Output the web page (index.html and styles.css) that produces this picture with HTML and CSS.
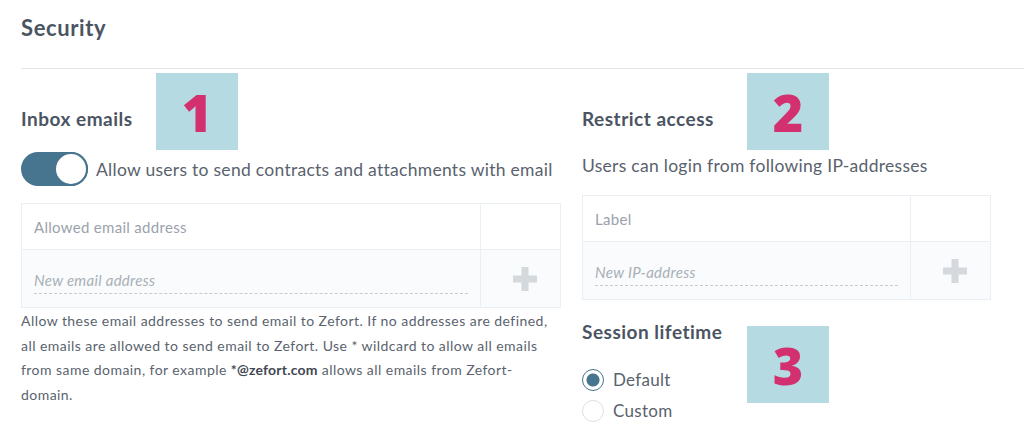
FILE: index.html
```html
<!DOCTYPE html>
<html lang="en">
<head>
    <meta charset="UTF-8">
    <title>Security</title>
    <link rel="stylesheet" href="styles.css">
</head>
<body>
    <div class="page">
        <h1 class="page_title">Security</h1>
        <div class="columns">
            <!-- 左列 -->
            <div class="col col_left">
                <div class="section">
                    <h2 class="section_title">Inbox emails</h2>
                    <span class="badge badge_1">1</span>
                    <label class="switch_row">
                        <span class="switch"><span class="knob"></span></span>
                        <span class="switch_label">Allow users to send contracts and attachments with email</span>
                    </label>
                    <div class="table">
                        <div class="row head">
                            <div class="cell main">Allowed email address</div>
                            <div class="cell side"></div>
                        </div>
                        <div class="row new">
                            <div class="cell main"><span class="input">New email address</span></div>
                            <div class="cell side">
                                <svg class="plus" width="24" height="24" viewBox="0 0 24 24"><path d="M8.5 0h7v8.5H24v7h-8.5V24h-7v-8.5H0v-7h8.5z" fill="#d3d9dd"/></svg>
                            </div>
                        </div>
                    </div>
                    <p class="help">Allow these email addresses to send email to Zefort. If no addresses are defined, all emails are allowed to send email to Zefort. Use * wildcard to allow all emails from same domain, for example <b>*@zefort.com</b> allows all emails from Zefort-domain.</p>
                </div>
            </div>
            <!-- 右列 -->
            <div class="col col_right">
                <div class="section">
                    <h2 class="section_title">Restrict access</h2>
                    <span class="badge badge_2">2</span>
                    <p class="lead">Users can login from following IP-addresses</p>
                    <div class="table">
                        <div class="row head">
                            <div class="cell main">Label</div>
                            <div class="cell side"></div>
                        </div>
                        <div class="row new">
                            <div class="cell main"><span class="input">New IP-address</span></div>
                            <div class="cell side">
                                <svg class="plus" width="24" height="24" viewBox="0 0 24 24"><path d="M8.5 0h7v8.5H24v7h-8.5V24h-7v-8.5H0v-7h8.5z" fill="#d3d9dd"/></svg>
                            </div>
                        </div>
                    </div>
                </div>
                <div class="section session">
                    <h2 class="section_title">Session lifetime</h2>
                    <span class="badge badge_3">3</span>
                    <label class="radio_row"><span class="radio checked"></span>Default</label>
                    <label class="radio_row"><span class="radio"></span>Custom</label>
                </div>
            </div>
        </div>
    </div>
</body>
</html>
```

FILE: styles.css
```css
*{
    margin: 0;
    padding: 0;
    box-sizing: border-box;
}

body{
    font-family: Lato, "Open Sans", sans-serif;
    color: #5a636e;
    background-color: #fff;
    overflow: hidden;
}

.page{
    padding: 14px 0 0 21px;
}

.page_title{
    font-size: 22px;
    font-weight: bold;
    letter-spacing: 0.6px;
    color: #4b5462;
    line-height: 28px;
    padding-bottom: 26px;
    border-bottom: 1px solid #e3e6e9;
}

.columns{
    display: flex;
    gap: 21px;
}

.col_left{
    width: 540px;
}

.col_right{
    width: 409px;
}

.section{
    position: relative;
    padding-top: 38px;
}

.section_title{
    font-size: 19px;
    font-weight: bold;
    letter-spacing: 0.5px;
    color: #4b5462;
    line-height: 24px;
}

.badge{
    position: absolute;
    width: 82px;
    height: 77px;
    background-color: #b5dae2;
    color: #d3306f;
    font-family: "Open Sans", sans-serif;
    font-size: 52px;
    font-weight: 800;
    line-height: 77px;
    text-align: center;
}

.badge_1{
    top: 4px;
    left: 135px;
}

.badge_2{
    top: 4px;
    left: 165px;
}

.badge_3{
    top: 26px;
    left: 165px;
}

.switch_row{
    display: flex;
    align-items: center;
    gap: 8px;
    margin-top: 21px;
}

.switch{
    position: relative;
    width: 67px;
    height: 34px;
    border-radius: 17px;
    background-color: #47748f;
}

.switch .knob{
    position: absolute;
    right: 0;
    top: 0;
    width: 34px;
    height: 34px;
    border-radius: 50%;
    background-color: #fff;
    border: 2px solid #47748f;
}

.switch_label{
    font-size: 17.5px;
    letter-spacing: 0.28px;
    color: #59626d;
}

.table{
    margin-top: 17px;
    border: 1px solid #e9eff3;
}

.row{
    display: flex;
}

.row.head{
    height: 46px;
    background-color: #fff;
    border-bottom: 1px solid #e9eff3;
}

.row.new{
    height: 57px;
    background-color: #f9fbfc;
}

.cell{
    display: flex;
    align-items: center;
}

.cell.main{
    flex: 1;
    padding: 0 12px;
    font-size: 15px;
    letter-spacing: 0.3px;
    color: #9aa2ac;
}

.cell.side{
    width: 80px;
    padding-left: 8px;
    border-left: 1px solid #e9eff3;
    justify-content: center;
}

.input{
    display: block;
    width: 100%;
    font-style: italic;
    color: #a8b0b8;
    padding-bottom: 4px;
    border-bottom: 1px dashed #c4ccd2;
    margin-top: 8px;
}

.help{
    margin-top: 1px;
    font-size: 14px;
    letter-spacing: 0.45px;
    line-height: 24.6px;
    color: #5a636e;
}

.help b{
    color: #3f4753;
    letter-spacing: 0.2px;
}

.lead{
    margin-top: 24px;
    font-size: 17.5px;
    letter-spacing: 0.28px;
    color: #59626d;
}

.col_right .table{
    margin-top: 19px;
}

.session{
    padding-top: 20px;
}

.session .section_title{
    margin-bottom: 20px;
}

.radio_row{
    display: flex;
    align-items: center;
    gap: 9px;
    font-size: 17px;
    letter-spacing: 0.3px;
    color: #59626d;
    height: 31px;
}

.radio{
    width: 22px;
    height: 22px;
    border-radius: 50%;
    border: 1px solid #d9e0e4;
    background-color: #fff;
}

.radio.checked{
    border-color: #47748f;
    background: radial-gradient(circle, #47748f 0 6px, #fff 7px);
}
```
